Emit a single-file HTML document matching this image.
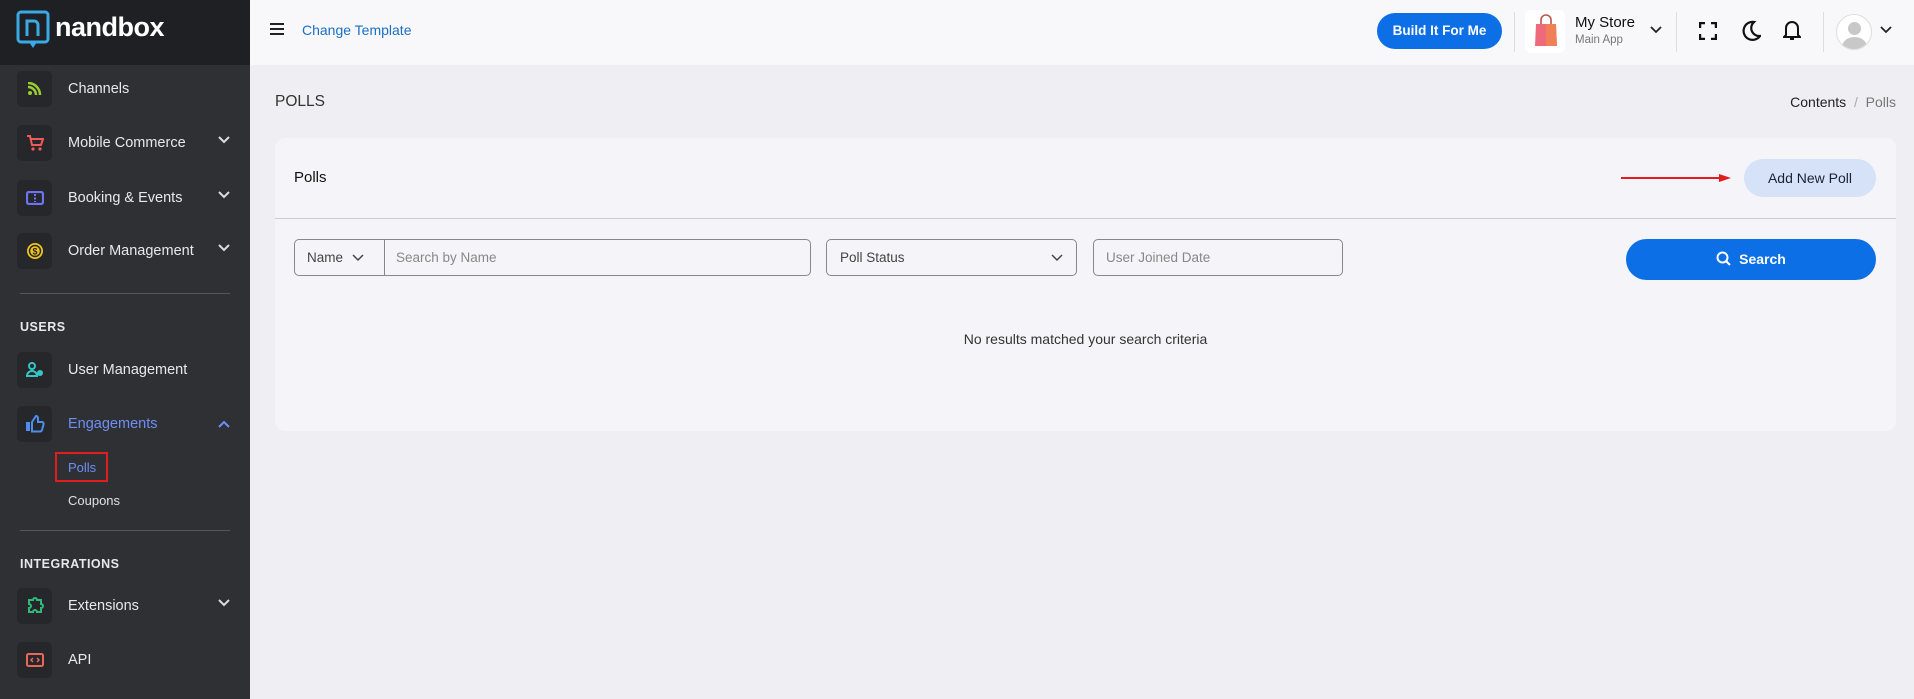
<!DOCTYPE html>
<html><head><meta charset="utf-8"><style>
*{box-sizing:border-box;margin:0;padding:0}
body{width:1914px;height:699px;overflow:hidden;background:#efeef2;font-family:"Liberation Sans",sans-serif;position:relative}
.sb{position:absolute;left:0;top:0;width:250px;height:699px;background:#2f3034}
.logo{position:absolute;left:0;top:0;width:250px;height:65px;background:#1f2023}
.logo .t{position:absolute;left:55px;top:12px;color:#fff;font-size:27px;font-weight:bold;letter-spacing:-0.5px}
.item{position:absolute;left:17px;height:36px;width:220px}
.ib{position:absolute;left:0;top:0;width:35px;height:36px;background:#26272a;border-radius:5px}
.item .lb{position:absolute;left:51px;top:10px;color:#e8e8ea;font-size:14.5px}
.chev{position:absolute;left:200px;top:10px}
.sec{position:absolute;left:20px;color:#e8e8ea;font-size:12.5px;font-weight:bold;letter-spacing:0.5px}
.div{position:absolute;left:20px;width:210px;height:1px;background:#55565b}
.sub{position:absolute;left:68px;color:#e0e0e2;font-size:13px}
.hdr{position:absolute;left:250px;top:0;width:1664px;height:65px;background:#f8f8fb}
.card{position:absolute;left:275px;top:138px;width:1621px;height:293px;background:#f5f4f8;border-radius:10px}
.inp{position:absolute;top:239px;height:37px;border:1px solid #888;border-radius:5px;font-size:13.5px;color:#444;padding-top:10px}
</style></head><body>
<div class="sb">
 <div class="logo">
  <svg style="position:absolute;left:16px;top:10px" width="34" height="40" viewBox="0 0 34 40"><rect x="2" y="2" width="30" height="30" rx="3" fill="none" stroke="#3aa9e6" stroke-width="3"/><path d="M13 32 L17 38 L21 32" fill="#3aa9e6"/><path d="M11 26V11h7a4 4 0 0 1 4 4v11" fill="none" stroke="#3aa9e6" stroke-width="3"/></svg>
  <div class="t">nandbox</div>
 </div>
 <div class="item" style="top:71px"><div class="ib"><svg style="position:absolute;left:10px;top:11px" width="15" height="14"><circle cx="3" cy="11" r="2" fill="#9acd32"/><path d="M1 5a8 8 0 0 1 8 8M1 1a12 12 0 0 1 12 12" stroke="#9acd32" stroke-width="2.5" fill="none"/></svg></div><div class="lb">Channels</div></div>
 <div class="item" style="top:125px"><div class="ib"><svg style="position:absolute;left:9px;top:9px" width="18" height="18"><path d="M1 2h3l2 9h9l2-6H5" stroke="#f05a5a" stroke-width="2" fill="none"/><circle cx="7" cy="15" r="1.6" fill="#f05a5a"/><circle cx="14" cy="15" r="1.6" fill="#f05a5a"/></svg></div><div class="lb">Mobile Commerce</div><svg class="chev" width="14" height="10"><path d="M2 2l5 5 5-5" stroke="#ddd" stroke-width="2" fill="none"/></svg></div>
 <div class="item" style="top:180px"><div class="ib"><svg style="position:absolute;left:9px;top:11px" width="18" height="14"><rect x="1" y="1" width="16" height="12" rx="2" fill="none" stroke="#6b74f5" stroke-width="2.2"/><path d="M9 3v8" stroke="#6b74f5" stroke-dasharray="2 1.5" stroke-width="2"/></svg></div><div class="lb">Booking &amp; Events</div><svg class="chev" width="14" height="10"><path d="M2 2l5 5 5-5" stroke="#ddd" stroke-width="2" fill="none"/></svg></div>
 <div class="item" style="top:233px"><div class="ib"><svg style="position:absolute;left:9px;top:9px" width="18" height="18"><circle cx="9" cy="9" r="8" fill="#f0c419"/><circle cx="9" cy="9" r="5.5" fill="none" stroke="#26272a" stroke-width="1.5"/><text x="9" y="12.5" font-size="9" text-anchor="middle" fill="#26272a" font-weight="bold" font-family="Liberation Sans">$</text></svg></div><div class="lb">Order Management</div><svg class="chev" width="14" height="10"><path d="M2 2l5 5 5-5" stroke="#ddd" stroke-width="2" fill="none"/></svg></div>
 <div class="div" style="top:293px"></div>
 <div class="sec" style="top:320px">USERS</div>
 <div class="item" style="top:352px"><div class="ib"><svg style="position:absolute;left:9px;top:10px" width="19" height="16"><circle cx="6" cy="4" r="3" fill="none" stroke="#36c5c5" stroke-width="2"/><path d="M1 14a5 5 0 0 1 10 0z" fill="none" stroke="#36c5c5" stroke-width="2"/><circle cx="14" cy="11" r="3" fill="#36c5c5"/></svg></div><div class="lb">User Management</div></div>
 <div class="item" style="top:406px"><div class="ib"><svg style="position:absolute;left:8px;top:9px" width="20" height="18"><rect x="1" y="7" width="4" height="9" fill="#4d8ef0"/><path d="M7 7l4-6c2 0 2 2 2 3v3h4c1 0 2 1 1.5 2.5L17 15c-.3 1-1 1.5-2 1.5H7z" fill="none" stroke="#4d8ef0" stroke-width="2"/></svg></div><div class="lb" style="color:#6d8ff5">Engagements</div><svg class="chev" width="14" height="10" style="top:13px"><path d="M2 8l5-5 5 5" stroke="#6d8ff5" stroke-width="2" fill="none"/></svg></div>
 <div style="position:absolute;left:55px;top:452px;width:53px;height:30px;border:2.5px solid #e01e1e"></div>
 <div class="sub" style="top:460px;color:#6d8ff5">Polls</div>
 <div class="sub" style="top:493px">Coupons</div>
 <div class="div" style="top:530px"></div>
 <div class="sec" style="top:557px">INTEGRATIONS</div>
 <div class="item" style="top:588px"><div class="ib"><svg style="position:absolute;left:9px;top:9px" width="18" height="18"><path d="M3 3h4a2 2 0 0 1 4 0h4v4a2 2 0 0 1 0 4v4h-4a2 2 0 0 0-4 0H3v-4a2 2 0 0 0 0-4z" fill="none" stroke="#2fb97a" stroke-width="2"/></svg></div><div class="lb">Extensions</div><svg class="chev" width="14" height="10"><path d="M2 2l5 5 5-5" stroke="#ddd" stroke-width="2" fill="none"/></svg></div>
 <div class="item" style="top:642px"><div class="ib"><svg style="position:absolute;left:9px;top:10px" width="18" height="16"><rect x="1" y="2" width="16" height="12" rx="1.5" fill="none" stroke="#e8685a" stroke-width="2"/><path d="M7 6l-2 2 2 2M11 6l2 2-2 2" stroke="#e8685a" stroke-width="1.5" fill="none"/></svg></div><div class="lb">API</div></div>
</div>
<div class="hdr">
 <svg style="position:absolute;left:20px;top:23px" width="14" height="12"><path d="M0 1h14M0 6h14M0 11h14" stroke="#222" stroke-width="2"/></svg>
 <div style="position:absolute;left:52px;top:22px;color:#1a6fc4;font-size:14px">Change Template</div>
 <div style="position:absolute;left:1127px;top:13px;width:125px;height:36px;border-radius:18px;background:#0d6fe6;color:#fff;font-size:13.5px;font-weight:bold;text-align:center;line-height:36px">Build It For Me</div>
 <div style="position:absolute;left:1264px;top:12px;width:1px;height:40px;background:#ddd"></div>
 <div style="position:absolute;left:1275px;top:10px;width:40px;height:43px;background:#fff;border-radius:6px"><svg style="position:absolute;left:8px;top:4px" width="26" height="36"><path d="M8 10V6a5 5 0 0 1 10 0v4" stroke="#c0524a" stroke-width="1.6" fill="none"/><path d="M3 10h20l1 22H2z" fill="#ee6a7a"/><path d="M13 10h10l1 22H13z" fill="#ef8a4a" opacity=".7"/></svg></div>
 <div style="position:absolute;left:1325px;top:14px;font-size:15px;color:#111">My Store</div>
 <div style="position:absolute;left:1325px;top:34px;font-size:11.5px;color:#777">Main App</div>
 <svg style="position:absolute;left:1400px;top:26px" width="12" height="8"><path d="M1 1l5 5 5-5" stroke="#222" stroke-width="1.8" fill="none"/></svg>
 <div style="position:absolute;left:1426px;top:12px;width:1px;height:40px;background:#ddd"></div>
 <svg style="position:absolute;left:1449px;top:22px" width="18" height="18"><path d="M1 6V1h5M12 1h5v5M17 12v5h-5M6 17H1v-5" stroke="#111" stroke-width="2.4" fill="none"/></svg>
 <svg style="position:absolute;left:1491px;top:20px" width="20" height="22"><path d="M13 2a9 9 0 1 0 6 14A8 8 0 0 1 13 2z" stroke="#111" stroke-width="2.2" fill="none"/></svg>
 <svg style="position:absolute;left:1533px;top:19px" width="18" height="22"><path d="M3 16V9a6 6 0 0 1 12 0v7l2 2H1z" stroke="#111" stroke-width="2" fill="none"/><path d="M7 20h4" stroke="#111" stroke-width="2"/></svg>
 <div style="position:absolute;left:1573px;top:12px;width:1px;height:40px;background:#ddd"></div>
 <div style="position:absolute;left:1586px;top:14px;width:36px;height:36px;border-radius:50%;border:1px solid #ddd;background:#fff;overflow:hidden"><div style="position:absolute;left:11px;top:7px;width:13px;height:13px;border-radius:50%;background:#c8c8c8"></div><div style="position:absolute;left:5px;top:22px;width:25px;height:20px;border-radius:50%;background:#c8c8c8"></div></div>
 <svg style="position:absolute;left:1630px;top:26px" width="12" height="8"><path d="M1 1l5 5 5-5" stroke="#222" stroke-width="1.8" fill="none"/></svg>
</div>
<div style="position:absolute;left:275px;top:93px;font-size:15.5px;color:#333">POLLS</div>
<div style="position:absolute;right:18px;top:94px;font-size:14px;color:#222">Contents <span style="color:#aaa">&nbsp;/&nbsp;</span> <span style="color:#777">Polls</span></div>
<div class="card">
 <div style="position:absolute;left:19px;top:31px;font-size:15px;color:#111">Polls</div>
 <svg style="position:absolute;left:1346px;top:35px" width="112" height="10"><path d="M0 5h100" stroke="#e01e1e" stroke-width="2"/><path d="M98 1l12 4-12 4z" fill="#e01e1e"/></svg>
 <div style="position:absolute;left:1469px;top:21px;width:132px;height:38px;border-radius:19px;background:#d6e2f8;color:#1a2233;font-size:14px;text-align:center;line-height:38px">Add New Poll</div>
 <div style="position:absolute;left:0;top:80px;width:1621px;height:1px;background:#ccc"></div>
</div>
<div class="inp" style="left:294px;width:517px;padding-left:12px">Name <svg width="12" height="8" style="margin-left:5px"><path d="M1 1l5 5 5-5" stroke="#444" stroke-width="1.5" fill="none"/></svg><span style="position:absolute;left:89px;top:0;width:1px;height:35px;background:#888"></span><span style="position:absolute;left:101px;color:#888">Search by Name</span></div>
<div class="inp" style="left:826px;width:251px;padding-left:13px">Poll Status<svg width="12" height="8" style="position:absolute;right:13px;top:14px"><path d="M1 1l5 5 5-5" stroke="#444" stroke-width="1.5" fill="none"/></svg></div>
<div class="inp" style="left:1093px;width:250px;padding-left:12px;color:#888">User Joined Date</div>
<div style="position:absolute;left:1626px;top:239px;width:250px;height:41px;border-radius:21px;background:#0d6fe6;color:#fff;font-size:14px;font-weight:bold;text-align:center;line-height:41px"><svg width="15" height="15" style="vertical-align:-2px;margin-right:8px"><circle cx="6.5" cy="6.5" r="5" stroke="#fff" stroke-width="2" fill="none"/><path d="M10 10l4 4" stroke="#fff" stroke-width="2"/></svg>Search</div>
<div style="position:absolute;left:275px;width:1621px;top:331px;text-align:center;font-size:14px;color:#333">No results matched your search criteria</div>
</body></html>
